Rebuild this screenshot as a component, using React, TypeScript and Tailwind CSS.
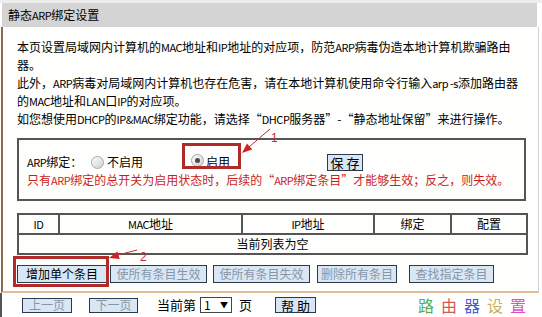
import React from 'react';

// SimSun-like condensed latin runs
const L: React.FC<{ children: React.ReactNode }> = ({ children }) => (
  <span className="text-[11px] tracking-[-0.5px]">{children}</span>
);

const Radio: React.FC<{ checked?: boolean }> = ({ checked }) => (
  <span className="relative inline-block w-[13px] h-[13px] rounded-full border border-[#a8a8a8] bg-gradient-to-br from-[#ffffff] to-[#cfcfcf]">
    {checked && <span className="absolute left-[3px] top-[3px] w-[5px] h-[5px] rounded-full bg-[#4a4a4a]" />}
  </span>
);

const Btn: React.FC<{ label: string; w: string; disabled?: boolean }> = ({ label, w, disabled }) => (
  <button
    type="button"
    className={`${w} h-[18px] flex items-center justify-center border border-[#2b3a4a] bg-[#d9e7f5] text-[12px] leading-none ${disabled ? 'text-[#8796a6]' : 'text-black'}`}
  >
    {label}
  </button>
);

const App: React.FC = () => {
  return (
    <div className="relative w-[542px] h-[317px] overflow-hidden bg-white text-[12px] text-black font-['Noto_Sans_CJK_SC',sans-serif]">
      <div className="h-[3px] bg-[#ededed]" />
      <div className="ml-[2px] mr-[5px] h-[24px] bg-[#d4d4d4] flex items-center pl-[6px] leading-none">静态<L>ARP</L>绑定设置</div>

      <div className="ml-[1px] mr-[3px] h-[266px] border-l-2 border-r border-b-2 border-l-[#8c6c4c] border-r-[#d4d4d4] border-b-[#e2bd96] bg-[#fefefc] pl-[14px]">
        <p className="pt-[11px] leading-[18px] whitespace-nowrap">
          本页设置局域网内计算机的<L>MAC</L>地址和<L>IP</L>地址的对应项，防范<L>ARP</L>病毒伪造本地计算机欺骗路由<br />
          器。<br />
          此外，<L>ARP</L>病毒对局域网内计算机也存在危害，请在本地计算机使用命令行输入<L>arp -s</L>添加路由器<br />
          的<L>MAC</L>地址和<L>LAN</L>口<L>IP</L>的对应项。<br />
          如您想使用<L>DHCP</L>的<L>IP&amp;MAC</L>绑定功能，请选择“<L>DHCP</L>服务器”-“静态地址保留”来进行操作。
        </p>

        <div className="mt-[10px] w-[509px] h-[63px] border-2 border-[#555555] pl-[8px]">
          <div className="mt-[13px] h-[18px] flex items-center whitespace-nowrap">
            <span className="w-[64px]"><L>ARP</L>绑定：</span>
            <Radio />
            <span className="ml-[3px] w-[36px]">不启用</span>
            <span className="ml-[48px]"><Radio checked /></span>
            <span className="ml-[2px] w-[24px]">启用</span>
            <button type="button" className="ml-[97px] w-[36px] h-[17px] flex items-center justify-center border border-[#2b3a4a] bg-[#d9e7f5] text-[13px] leading-none">保 存</button>
          </div>
          <div className="leading-[18px] text-[#c81e1e] whitespace-nowrap">
            只有<L>ARP</L>绑定的总开关为启用状态时，后续的“<L>ARP</L>绑定条目”才能够生效；反之，则失效。
          </div>
        </div>

        <table className="mt-[12px] w-[509px] border-collapse table-fixed text-center">
          <colgroup>
            <col className="w-[41px]" />
            <col className="w-[183px]" />
            <col className="w-[132px]" />
            <col className="w-[77px]" />
            <col className="w-[76px]" />
          </colgroup>
          <tbody>
            <tr className="h-[20px]">
              <td className="border-2 border-[#555555] p-0 leading-none"><L>ID</L></td>
              <td className="border-2 border-[#555555] p-0 leading-none"><L>MAC</L>地址</td>
              <td className="border-2 border-[#555555] p-0 leading-none"><L>IP</L>地址</td>
              <td className="border-2 border-[#555555] p-0 leading-none">绑定</td>
              <td className="border-2 border-[#555555] p-0 leading-none">配置</td>
            </tr>
            <tr className="h-[20px]">
              <td colSpan={5} className="border-2 border-[#555555] p-0 leading-none">当前列表为空</td>
            </tr>
          </tbody>
        </table>

        <div className="mt-[10px] flex items-center">
          <Btn label="增加单个条目" w="w-[90px]" />
          <span className="ml-[3px]"><Btn label="使所有条目生效" w="w-[97px]" disabled /></span>
          <span className="ml-[6px]"><Btn label="使所有条目失效" w="w-[97px]" disabled /></span>
          <span className="ml-[7px]"><Btn label="删除所有条目" w="w-[80px]" disabled /></span>
          <span className="ml-[12px]"><Btn label="查找指定条目" w="w-[85px]" disabled /></span>
        </div>
      </div>

      <div className="h-[24px] flex items-center border-l-2 border-l-[#555555] pl-[20px] whitespace-nowrap">
        <button type="button" className="w-[50px] h-[15px] flex items-center justify-center border border-[#2b3a4a] bg-[#d9e7f5] text-[12px] leading-none text-[#8796a6]">上一页</button>
        <button type="button" className="ml-[17px] w-[49px] h-[15px] flex items-center justify-center border border-[#2b3a4a] bg-[#d9e7f5] text-[12px] leading-none text-[#8796a6]">下一页</button>
        <span className="ml-[19px] w-[43px] text-[13px]">当前第</span>
        <span className="w-[32px] h-[16px] flex items-center justify-between border border-[#444444] bg-white px-[3px] text-[12px] leading-none">
          <span>1</span>
          <span className="text-[8px]">▼</span>
        </span>
        <span className="ml-[7px] text-[13px]">页</span>
        <button type="button" className="ml-[23px] w-[41px] h-[16px] flex items-center justify-center border border-[#2b3a4a] bg-[#d9e7f5] text-[13px] leading-none">帮 助</button>
      </div>

      <div className="absolute left-[408px] top-[293px] w-[134px] h-[24px] bg-white flex items-center pl-[10px] text-[16px] leading-none tracking-[7px]">
        <span className="text-[#5aa85a]">路</span>
        <span className="text-[#d05858]">由</span>
        <span className="text-[#4a5ad0]">器</span>
        <span className="text-[#c8b060]">设</span>
        <span className="text-[#e050c0]">置</span>
      </div>

      <svg className="absolute left-0 top-0 pointer-events-none" width="542" height="317" viewBox="0 0 542 317">
        <rect x="183.5" y="144.5" width="56" height="23" fill="none" stroke="#b02a2a" strokeWidth="3" />
        <line x1="270" y1="129" x2="249" y2="147" stroke="#c03030" strokeWidth="1" />
        <polygon points="242,153 252.2,149.5 247,143.5" fill="#d42020" />
        <text x="271" y="142" fontSize="12" fill="#c03030" fontFamily="Liberation Sans, sans-serif">1</text>

        <rect x="14.5" y="257.5" width="93" height="28" fill="none" stroke="#b02a2a" strokeWidth="3" />
        <line x1="137" y1="250" x2="118" y2="255" stroke="#c03030" strokeWidth="1" />
        <polygon points="109,258 117.5,251.4 119.7,259" fill="#d42020" />
        <text x="140" y="261" fontSize="12" fill="#c03030" fontFamily="Liberation Sans, sans-serif">2</text>
      </svg>
    </div>
  );
};

export default App;
